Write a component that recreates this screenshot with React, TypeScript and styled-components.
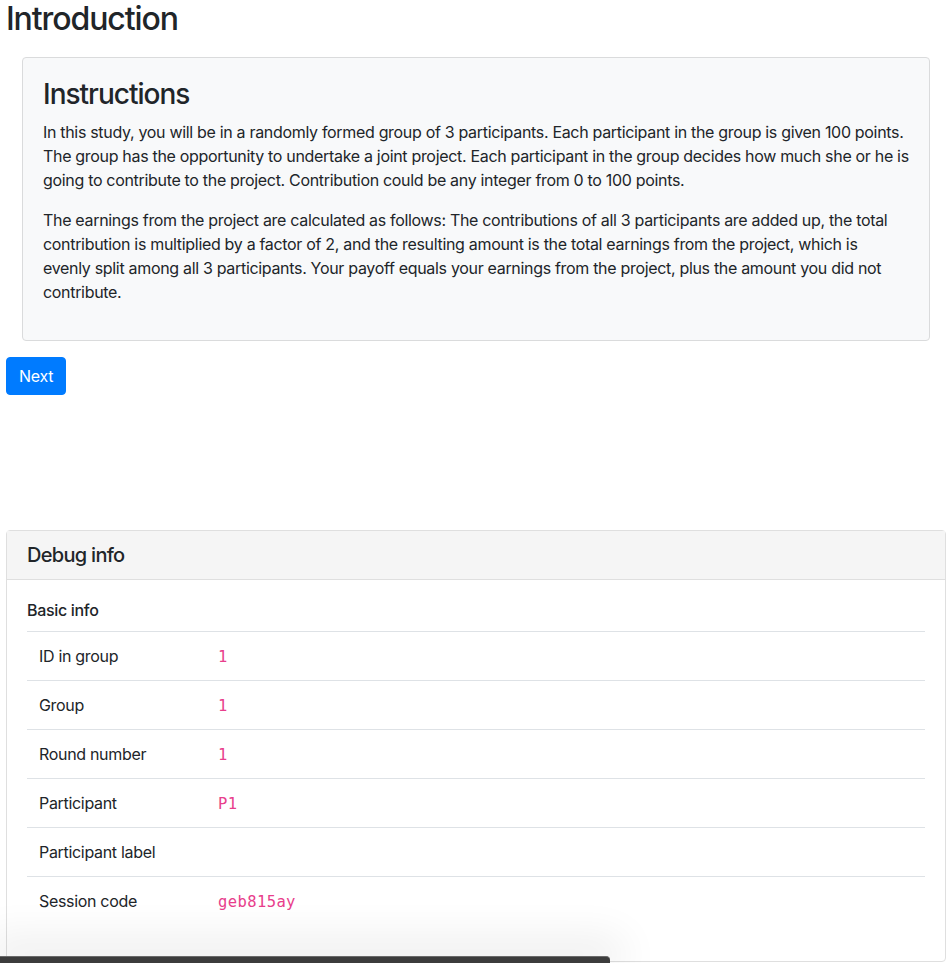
import React from "react";
import styled, { createGlobalStyle } from "styled-components";

const Global = createGlobalStyle`
  html, body { margin: 0; padding: 0; background: #fff; }
  body {
    font-family: Inter, "Noto Sans", "Liberation Sans", sans-serif;
    font-size: 16px;
    line-height: 1.5;
    color: #212529;
    letter-spacing: -0.317px;
    overflow: hidden;
  }
  * { box-sizing: border-box; }
`;

const Page = styled.div`
  width: 940px;
  margin-left: 6px;
  height: 963px;
  overflow: hidden;
`;

const Title = styled.h2`
  margin: 0;
  font-size: 32px;
  font-weight: 500;
  line-height: 38px;
  letter-spacing: -1.1px;
`;

const InstructionsCard = styled.div`
  margin: 19px 16px 16px;
  padding: 20px 20px;
  background: #f8f9fa;
  border: 1px solid #dadbdc;
  border-radius: 4px;
`;

const CardTitle = styled.h3`
  margin: 0 0 8px;
  font-size: 28px;
  font-weight: 500;
  line-height: 33.6px;
  letter-spacing: -1px;
`;

const Para = styled.p`
  margin: 0 0 16px;
  font-size: 16px;
  line-height: 24px;
`;

const Button = styled.button`
  display: inline-block;
  font-family: inherit;
  font-size: 16px;
  line-height: 24px;
  letter-spacing: -0.3px;
  padding: 6px 12px;
  height: 38px;
  color: #fff;
  background: #007bff;
  border: 1px solid #007bff;
  border-radius: 4px;
`;

const DebugCard = styled.div`
  margin-top: 135px;
  border: 1px solid #dfdfdf;
  border-radius: 4px;
  background: #fff;
`;

const DebugHeader = styled.div`
  padding: 12px 20px;
  font-size: 20px;
  line-height: 24px;
  font-weight: 500;
  letter-spacing: -0.7px;
  background: #f5f5f5;
  border-bottom: 1px solid #dfdfdf;
`;

const DebugBody = styled.div`
  padding: 20px;
`;

const SectionTitle = styled.h6`
  margin: 0 0 11px;
  font-size: 16px;
  font-weight: 500;
  line-height: 20px;
`;

const Table = styled.table`
  width: 100%;
  border-collapse: collapse;
  margin-bottom: 16px;
`;

const Row = styled.tr`
  border-top: 1px solid #dee2e6;
`;

const Label = styled.td`
  width: 179px;
  height: 48px;
  padding: 12px;
  font-size: 16px;
  line-height: 24px;
  vertical-align: middle;
`;

const Value = styled.td`
  padding: 12px;
  height: 48px;
  line-height: 24px;
  vertical-align: middle;
`;

const Code = styled.code`
  font-family: "DejaVu Sans Mono", "Liberation Mono", monospace;
  font-size: 15.5px;
  line-height: 1;
  color: #e83e8c;
  letter-spacing: 0.4px;
`;

const Dock = styled.div`
  position: fixed;
  left: 0;
  bottom: 0;
  width: 610px;
  height: 7px;
  background: #3c3c3c;
  border-top: 1px solid #6a6a6a;
  border-top-right-radius: 4px;
  box-shadow: 0 -6px 40px 14px rgba(0, 0, 0, 0.07);
`;

const rows: [string, string][] = [
  ["ID in group", "1"],
  ["Group", "1"],
  ["Round number", "1"],
  ["Participant", "P1"],
  ["Participant label", ""],
  ["Session code", "geb815ay"],
];

export default function App() {
  return (
    <>
      <Global />
      <Page>
        <Title>Introduction</Title>
        <InstructionsCard>
          <CardTitle>Instructions</CardTitle>
          <Para>
            In this study, you will be in a randomly formed group of 3 participants. Each participant in the group is given 100 points. The group has the opportunity to undertake a joint project. Each participant in the group decides how much she or he is going to contribute to the project. Contribution could be any integer from 0 to 100 points.
          </Para>
          <Para>
            The earnings from the project are calculated as follows: The contributions of all 3 participants are added up, the total contribution is multiplied by a factor of 2, and the resulting amount is the total earnings from the project, which is evenly split among all 3 participants. Your payoff equals your earnings from the project, plus the amount you did not contribute.
          </Para>
        </InstructionsCard>
        <Button>Next</Button>
        <DebugCard>
          <DebugHeader>Debug info</DebugHeader>
          <DebugBody>
            <SectionTitle>Basic info</SectionTitle>
            <Table>
              <tbody>
                {rows.map(([k, v]) => (
                  <Row key={k}>
                    <Label>{k}</Label>
                    <Value>{v && <Code>{v}</Code>}</Value>
                  </Row>
                ))}
              </tbody>
            </Table>
          </DebugBody>
        </DebugCard>
      </Page>
      <Dock />
    </>
  );
}
